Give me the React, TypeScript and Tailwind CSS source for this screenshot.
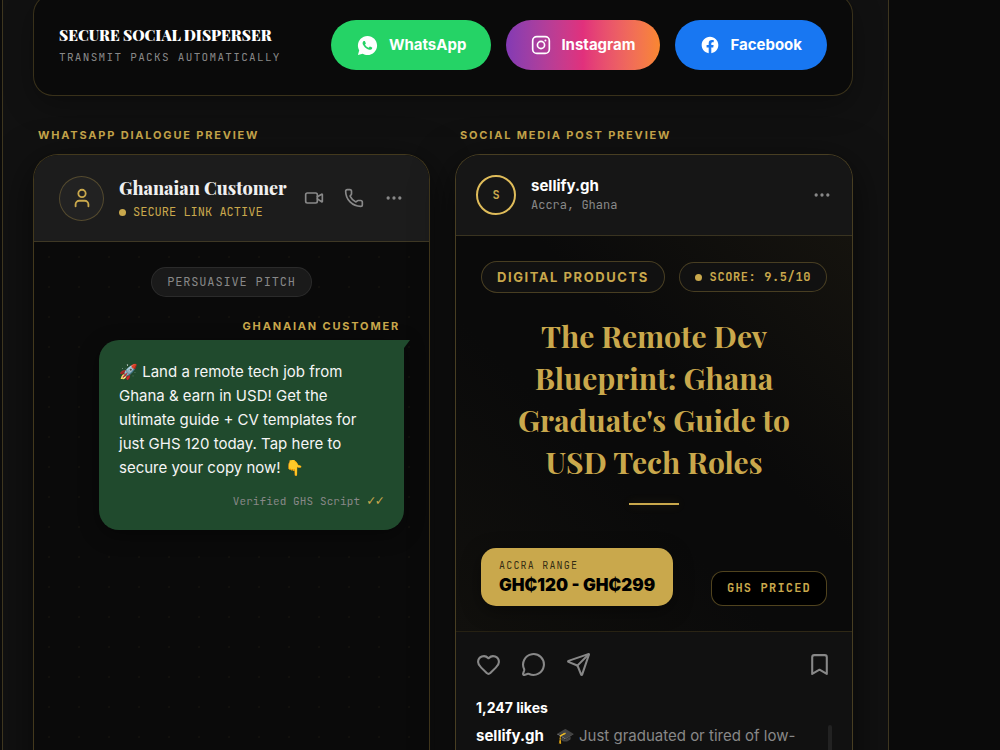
import React from 'react';
import { Bookmark, Ellipsis, Heart, MessageCircle, Phone, Send, User, Video } from 'lucide-react';
import { RiFacebookCircleFill, RiWhatsappFill } from 'react-icons/ri';

const SERIF = "font-['Playfair_Display','Liberation_Serif',serif]";
const MONO = "font-['JetBrains_Mono','Liberation_Mono',monospace]";
const LABEL = 'text-[11px] leading-[18px] font-bold tracking-[0.165em] text-[#c9a84c]';

function InstagramIcon({ size }: { size: number }) {
  return (
    <svg width={size} height={size} viewBox="0 0 24 24" fill="none" stroke="currentColor" strokeWidth="2" aria-hidden="true">
      <rect x="2" y="2" width="20" height="20" rx="5" />
      <circle cx="12" cy="12" r="4.3" />
      <circle cx="17.3" cy="6.7" r="1.2" fill="currentColor" stroke="none" />
    </svg>
  );
}

const shareButtons = [
  { label: 'WhatsApp', icon: RiWhatsappFill, size: 23, style: 'bg-[#25d366]' },
  { label: 'Instagram', icon: InstagramIcon, size: 20, style: 'bg-linear-to-r from-[#833ab4] via-[#e1307c] to-[#f9872f]' },
  { label: 'Facebook', icon: RiFacebookCircleFill, size: 20, style: 'bg-[#1877f2]' },
];

function ShareBar() {
  return (
    <section className="-mt-1.5 flex items-center justify-between rounded-[20px] border border-[#c9a84c]/25 bg-[#0a0a0a] p-[25px] shadow-[0_10px_30px_rgba(0,0,0,0.3)]">
      <div className="whitespace-nowrap">
        <h2 className={`${SERIF} text-[15px] leading-6 font-black text-white`}>SECURE SOCIAL DISPERSER</h2>
        <p className={`${MONO} text-[11px] leading-5 tracking-[0.12em] text-[#888]`}>TRANSMIT PACKS AUTOMATICALLY</p>
      </div>
      <div className="flex gap-[15px]">
        {shareButtons.map(({ label, icon: Icon, size, style }) => (
          <button key={label} type="button" className={`flex h-[50px] items-center gap-2.5 rounded-full px-[25px] text-[15px] font-bold text-white ${style}`}>
            <Icon size={size} />
            {label}
          </button>
        ))}
      </div>
    </section>
  );
}

function ChatPreview() {
  return (
    <article className="flex grow flex-col overflow-hidden rounded-[25px] border border-[#c9a84c]/30 bg-[#0a0a0a] shadow-[0_10px_40px_rgba(0,0,0,0.6)]">
      <header className="flex items-center gap-[15px] border-b border-[#c9a84c]/20 bg-[#1c1c1c] px-[25px] py-5">
        <div className="flex size-[45px] shrink-0 items-center justify-center rounded-full border border-[#c9a84c]/30 bg-[#222] text-[#c9a84c]">
          <User size={22} />
        </div>
        <div className="grow whitespace-nowrap">
          <h3 className={`${SERIF} text-lg leading-[26px] font-extrabold text-[#f0f0f0]`}>Ghanaian Customer</h3>
          <p className={`${MONO} mt-0.5 flex items-center gap-[7px] text-xs leading-[18px] text-[#c9a84c]`}>
            <span className="size-[7px] rounded-full bg-[#c9a84c]" />
            SECURE LINK ACTIVE
          </p>
        </div>
        <div className="flex gap-5 text-[#888]">
          <button type="button" aria-label="Video call"><Video size={20} /></button>
          <button type="button" aria-label="Call"><Phone size={20} /></button>
          <button type="button" aria-label="More"><Ellipsis size={20} /></button>
        </div>
      </header>

      <div className="flex grow flex-col bg-[radial-gradient(circle,rgba(201,168,76,0.04)_1px,transparent_1px)] bg-[size:30px_30px] p-[25px]">
        <span className={`${MONO} self-center rounded-full border border-white/8 bg-[#1a1a1a] px-[15px] text-xs leading-7 tracking-[0.07em] text-[#888]`}>
          PERSUASIVE PITCH
        </span>
        <p className={`mt-5 pr-1 text-right ${LABEL}`}>GHANAIAN CUSTOMER</p>
        <div className="relative mt-[5px] max-w-[305px] self-end rounded-[20px] rounded-tr-none bg-[#204a2d] p-5 shadow-[0_5px_20px_rgba(0,0,0,0.4)]">
          <p className="text-[15px] leading-6 text-[#f5f5f5]">
            🚀 Land a remote tech job from Ghana &amp; earn in USD! Get the ultimate guide + CV templates for just GHS 120 today. Tap here to secure your copy now! 👇
          </p>
          <p className={`${MONO} mt-3 text-right text-[11px] leading-[18px] tracking-[0.01em] text-[#888]`}>
            Verified GHS Script <span className="text-sm leading-none text-[#c9a84c]">✓✓</span>
          </p>
          <svg className="absolute top-0 left-full" width="6" height="8" viewBox="0 0 6 8" aria-hidden="true">
            <path d="M0 0h6L0 8z" fill="#204a2d" />
          </svg>
        </div>
      </div>
    </article>
  );
}

function PostPreview() {
  return (
    <article className="flex grow flex-col overflow-hidden rounded-[25px] border border-[#c9a84c]/30 bg-[#111] shadow-[0_10px_40px_rgba(0,0,0,0.6)]">
      <header className="flex items-center gap-[15px] border-b border-[#c9a84c]/20 bg-[#161616] p-5">
        <div className={`${MONO} flex size-10 items-center justify-center rounded-full border-2 border-[#dfbc5a] text-xs font-bold text-[#c9a84c]`}>S</div>
        <div className="grow">
          <h3 className="text-[15px] leading-5 font-bold text-white">sellify.gh</h3>
          <p className={`${MONO} text-xs leading-[18px] text-[#888]`}>Accra, Ghana</p>
        </div>
        <button type="button" aria-label="Post options" className="text-[#888]"><Ellipsis size={20} /></button>
      </header>

      <div className="border-b border-[#c9a84c]/15 bg-[linear-gradient(45deg,#11100d_0%,#0a0a0a_40%,#0a0a0a_60%,#15130e_100%)] p-[25px]">
        <div className="flex items-center justify-between whitespace-nowrap">
          <span className="rounded-full border border-[#c9a84c]/30 bg-[#111] px-[15px] text-[13px] leading-[30px] font-bold tracking-[0.12em] text-[#c9a84c]">DIGITAL PRODUCTS</span>
          <span className={`${MONO} flex items-center gap-2 rounded-full border border-[#c9a84c]/30 bg-[#111] px-[15px] text-xs leading-7 font-bold tracking-[0.05em] text-[#c9a84c]`}>
            <span className="size-[7px] rounded-full bg-[#c9a84c]" />
            SCORE: 9.5/10
          </span>
        </div>
        <h2 className={`${SERIF} mx-auto mt-[22px] max-w-[290px] text-center text-3xl leading-[42px] font-bold text-[#c9a84c]`}>
          The Remote Dev Blueprint: Ghana Graduate's Guide to USD Tech Roles
        </h2>
        <div className="mx-auto mt-5 h-0.5 w-[50px] bg-[#c9a84c] shadow-[0_0_10px_rgba(201,168,76,0.2)]" />
        <div className="mt-[43px] flex items-end justify-between whitespace-nowrap">
          <div className="rounded-[15px] bg-[#c9a84c] px-[18px] py-2.5 text-black shadow-[0_5px_20px_rgba(0,0,0,0.4)]">
            <p className={`${MONO} text-[10px] leading-4 tracking-[0.12em] text-black/75`}>ACCRA RANGE</p>
            <p className="text-[17px] leading-[22px] font-black">GH₵120 - GH₵299</p>
          </div>
          <span className={`${MONO} rounded-xl border border-[#c9a84c]/40 bg-black px-[15px] text-xs leading-[33px] font-bold tracking-[0.1em] text-[#c9a84c]`}>GHS PRICED</span>
        </div>
      </div>

      <div className="p-5">
        <div className="flex gap-5 text-[#888]">
          <button type="button" aria-label="Like"><Heart size={25} /></button>
          <button type="button" aria-label="Comment"><MessageCircle size={25} /></button>
          <button type="button" aria-label="Share"><Send size={25} /></button>
          <button type="button" aria-label="Save" className="ml-auto"><Bookmark size={25} /></button>
        </div>
        <p className="mt-[21px] text-sm leading-5 font-bold text-white">1,247 likes</p>
        <div className="mt-[7px] flex h-20 justify-between text-[15px] leading-[22px] text-[#888]">
          <p>
            <b className="mr-3 font-bold text-white">sellify.gh</b>
            🎓 Just graduated or tired of low-
          </p>
          <div className="h-16 w-1 shrink-0 rounded-full bg-[#222]" />
        </div>
      </div>
    </article>
  );
}

export default function App() {
  return (
    <div className="h-screen overflow-hidden bg-[#0a0a0a] pr-[111px] pl-0.5 font-['Inter',sans-serif]">
      <main className="h-full overflow-hidden border-x border-[#c9a84c]/25 bg-[#111] pr-[35px] pl-[30px]">
        <ShareBar />
        <div className="mt-[30px] grid grid-cols-[397fr_398fr] gap-[25px]">
          <section className="flex flex-col">
            <h2 className={`mb-2.5 pl-[5px] ${LABEL}`}>WHATSAPP DIALOGUE PREVIEW</h2>
            <ChatPreview />
          </section>
          <section className="flex flex-col">
            <h2 className={`mb-2.5 pl-[5px] ${LABEL}`}>SOCIAL MEDIA POST PREVIEW</h2>
            <PostPreview />
          </section>
        </div>
      </main>
    </div>
  );
}
